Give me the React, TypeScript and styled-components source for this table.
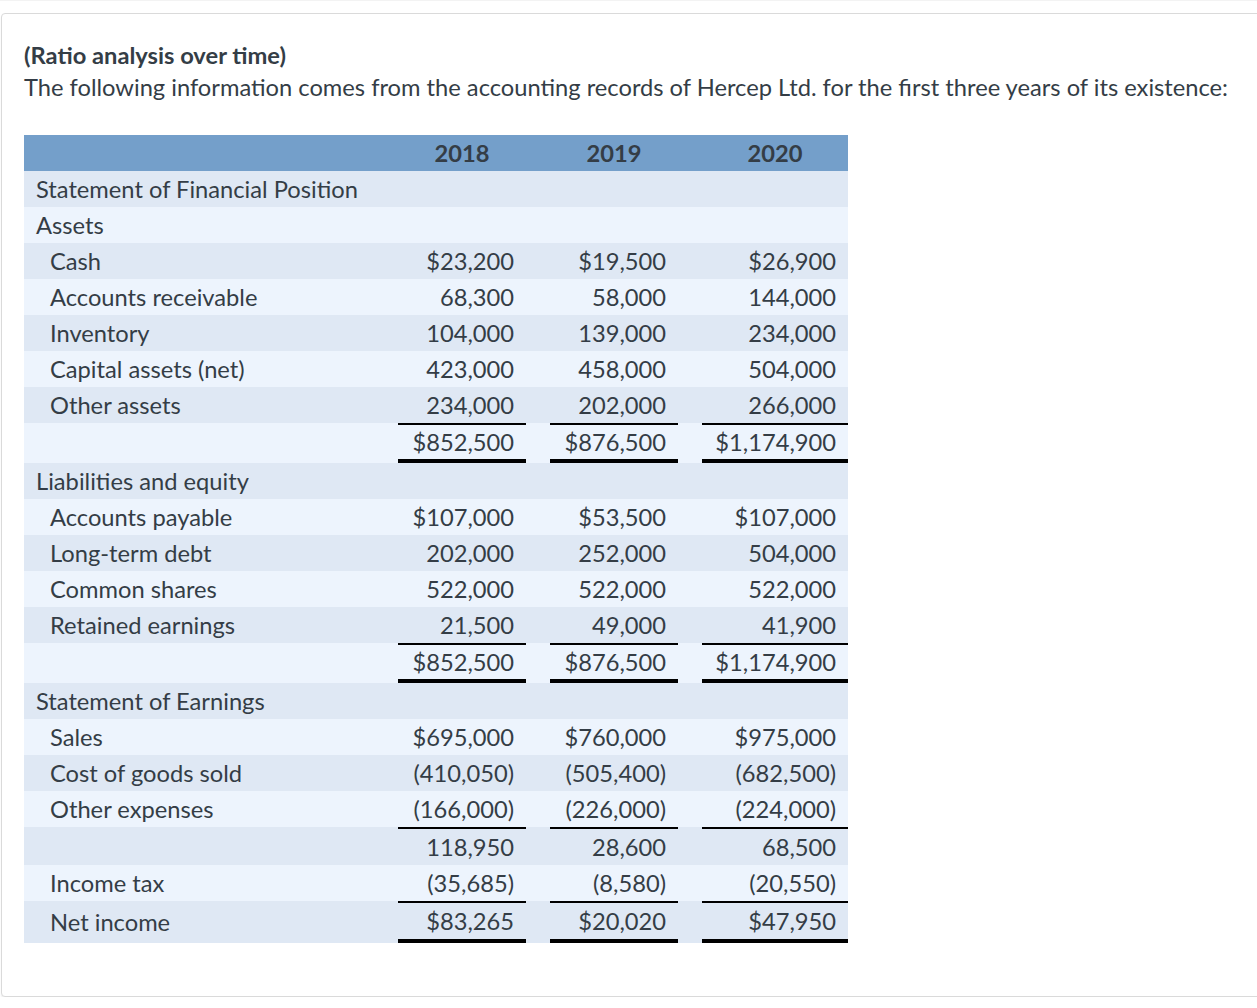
import styled, { createGlobalStyle } from "styled-components"

const GlobalStyle = createGlobalStyle`
  body {
    margin: 0;
    background: #ffffff;
    border-top: 1px solid #f3f3f3;
    font-family: Lato, "Open Sans", sans-serif;
    color: #343d46;
    overflow: hidden;
  }
`

const Card = styled.section`
  margin: 12px -24px 0 1px;
  padding: 25px 46px 53px 22px;
  border: 1px solid #dadada;
  border-radius: 4px;
  box-shadow: 0 2px 2px rgba(0, 0, 0, 0.06);
  background: #ffffff;
`

const Title = styled.div`
  font-size: 23.7px;
  line-height: 32px;
  font-weight: 700;
`

const Intro = styled.p`
  margin: 0 0 32px;
  font-size: 23.7px;
  line-height: 32px;
  white-space: nowrap;
`

const Table = styled.table`
  border-collapse: collapse;
  font-size: 23.7px;
  width: 824px;
  table-layout: fixed;
`

const HeadRow = styled.tr`
  background: #749fca;
  height: 36px;
`

const BlankHead = styled.td`
  width: 350px;
  padding: 0;
`

const HeadCell = styled.th<{ $wide?: boolean }>`
  padding: 0 0 0 24px;
  font-weight: 700;
  text-align: center;
  width: ${(p) => (p.$wide ? "146px" : "128px")};
  line-height: 35px;
`

const Row = styled.tr`
  background: #edf4fd;
  &:nth-child(odd) {
    background: #dfe8f4;
  }
`

const LabelCell = styled.td<{ $indent?: boolean }>`
  padding: 0 0 0 ${(p) => (p.$indent ? "26px" : "12px")};
  line-height: 36px;
  white-space: nowrap;
`

const NumCell = styled.td`
  padding: 0 0 0 24px;
`

const Amount = styled.div<{ $top?: boolean; $bottom?: boolean; $tall?: boolean }>`
  padding-right: 12px;
  text-align: right;
  white-space: nowrap;
  line-height: ${(p) => (p.$top && p.$bottom && !p.$tall ? "34px" : "36px")};
  border-top: ${(p) => (p.$top ? "2px solid #000" : "none")};
  border-bottom: ${(p) => (p.$bottom ? "4px solid #000" : "none")};
`

type Kind = "section" | "item" | "total" | "subtotal" | "net"

type Line = { label: string; kind: Kind; values?: string[] }

const lines: Line[] = [
  { label: "Statement of Financial Position", kind: "section" },
  { label: "Assets", kind: "section" },
  { label: "Cash", kind: "item", values: ["$23,200", "$19,500", "$26,900"] },
  { label: "Accounts receivable", kind: "item", values: ["68,300", "58,000", "144,000"] },
  { label: "Inventory", kind: "item", values: ["104,000", "139,000", "234,000"] },
  { label: "Capital assets (net)", kind: "item", values: ["423,000", "458,000", "504,000"] },
  { label: "Other assets", kind: "item", values: ["234,000", "202,000", "266,000"] },
  { label: "", kind: "total", values: ["$852,500", "$876,500", "$1,174,900"] },
  { label: "Liabilities and equity", kind: "section" },
  { label: "Accounts payable", kind: "item", values: ["$107,000", "$53,500", "$107,000"] },
  { label: "Long-term debt", kind: "item", values: ["202,000", "252,000", "504,000"] },
  { label: "Common shares", kind: "item", values: ["522,000", "522,000", "522,000"] },
  { label: "Retained earnings", kind: "item", values: ["21,500", "49,000", "41,900"] },
  { label: "", kind: "total", values: ["$852,500", "$876,500", "$1,174,900"] },
  { label: "Statement of Earnings", kind: "section" },
  { label: "Sales", kind: "item", values: ["$695,000", "$760,000", "$975,000"] },
  { label: "Cost of goods sold", kind: "item", values: ["(410,050)", "(505,400)", "(682,500)"] },
  { label: "Other expenses", kind: "item", values: ["(166,000)", "(226,000)", "(224,000)"] },
  { label: "", kind: "subtotal", values: ["118,950", "28,600", "68,500"] },
  { label: "Income tax", kind: "item", values: ["(35,685)", "(8,580)", "(20,550)"] },
  { label: "Net income", kind: "net", values: ["$83,265", "$20,020", "$47,950"] },
]

const years = ["2018", "2019", "2020"]

export default function App() {
  return (
    <>
      <GlobalStyle />
      <Card>
        <Title>(Ratio analysis over time)</Title>
        <Intro>
          The following information comes from the accounting records of Hercep Ltd. for the first
          three years of its existence:
        </Intro>
        <Table>
          <thead>
            <HeadRow>
              <BlankHead />
              {years.map((y, i) => (
                <HeadCell key={y} $wide={i === 2}>
                  {y}
                </HeadCell>
              ))}
            </HeadRow>
          </thead>
          <tbody>
            {lines.map((line, i) => {
              const top = line.kind === "total" || line.kind === "subtotal" || line.kind === "net"
              const bottom = line.kind === "total" || line.kind === "net"
              return (
                <Row key={i}>
                  <LabelCell $indent={line.kind !== "section"}>{line.label}</LabelCell>
                  {line.kind === "section"
                    ? years.map((y) => <NumCell key={y} />)
                    : line.values!.map((v, j) => (
                        <NumCell key={j}>
                          <Amount $top={top} $bottom={bottom} $tall={line.kind === "net"}>
                            {v}
                          </Amount>
                        </NumCell>
                      ))}
                </Row>
              )
            })}
          </tbody>
        </Table>
      </Card>
    </>
  )
}
